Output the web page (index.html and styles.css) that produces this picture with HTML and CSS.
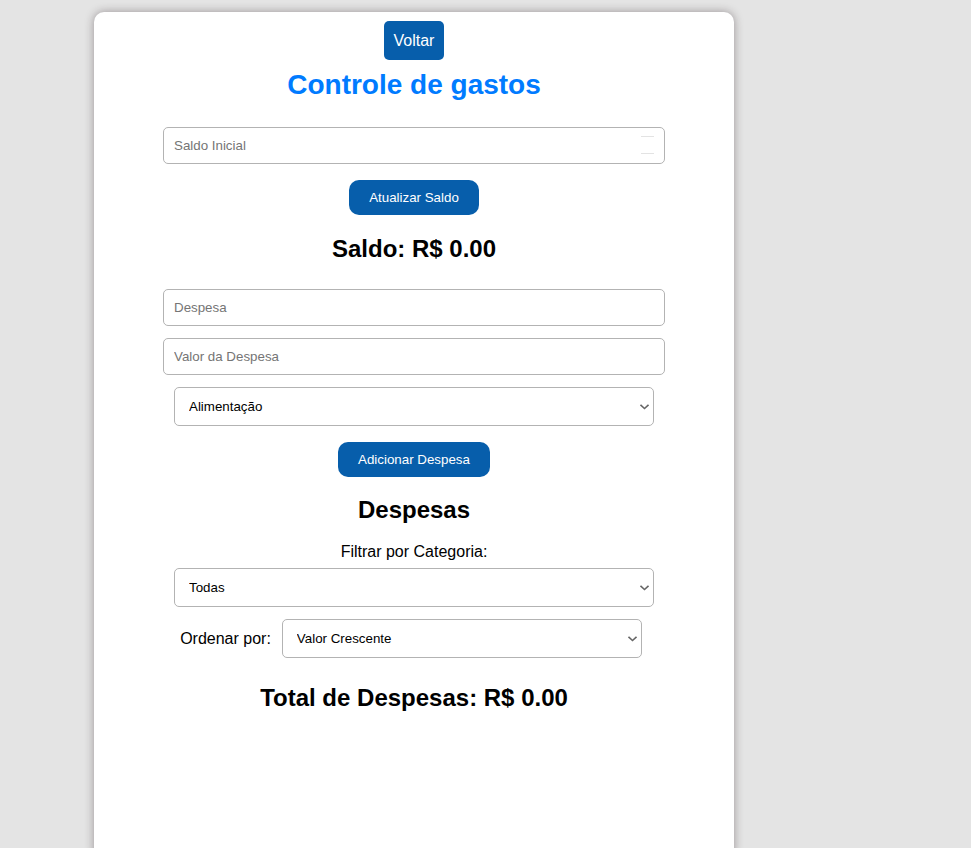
FILE: index.html
```html
<!DOCTYPE html>
<html lang="pt-BR">
<head>
<meta charset="utf-8">
<meta name="viewport" content="width=device-width, initial-scale=1">
<title>Controle de gastos</title>
<link rel="stylesheet" href="styles.css">
</head>
<body>
<main class="card">
  <a class="back" href="#">Voltar</a>
  <h1 class="title">Controle de gastos</h1>
  <input class="field field-stepper" type="number" placeholder="Saldo Inicial" aria-label="Saldo Inicial">
  <button class="button" type="button">Atualizar Saldo</button>
  <h2 class="heading heading-balance">Saldo: R$ 0.00</h2>
  <form class="form">
    <input class="field" type="text" placeholder="Despesa" aria-label="Despesa">
    <input class="field" type="number" placeholder="Valor da Despesa" aria-label="Valor da Despesa">
    <select class="select" aria-label="Categoria">
      <option>Alimentação</option>
    </select>
    <button class="button button-add" type="button">Adicionar Despesa</button>
  </form>
  <h2 class="heading heading-list">Despesas</h2>
  <label class="label" for="filtro">Filtrar por Categoria:</label>
  <select class="select select-filter" id="filtro">
    <option>Todas</option>
  </select>
  <div class="sort">
    <label class="label" for="ordem">Ordenar por:</label>
    <select class="select select-sort" id="ordem">
      <option>Valor Crescente</option>
    </select>
  </div>
  <h2 class="heading heading-total">Total de Despesas: R$ 0.00</h2>
</main>
</body>
</html>
```
FILE: styles.css
```css
* {
  box-sizing: border-box;
}

html {
  scrollbar-width: none;
}

body {
  display: flex;
  margin: 0;
  padding: 12px 12px 0 94px;
  background: #e4e4e4;
  color: #000;
  font-family: "Liberation Sans", Arial, sans-serif;
  font-size: 16px;
}

.card {
  display: flex;
  flex-direction: column;
  align-items: center;
  width: 100%;
  max-width: 640px;
  min-height: 100vh;
  padding: 9px 64px 40px;
  border-radius: 10px;
  background: #fff;
  box-shadow: 0 0 10px rgba(40, 24, 30, 0.4);
}

.back {
  padding: 10px;
  border-radius: 5px;
  background: #075eab;
  color: #fff;
  line-height: 19px;
  text-decoration: none;
}

.title {
  margin: 9px 0 26px;
  color: #007bff;
  font-size: 28px;
  line-height: 32px;
}

.form {
  display: flex;
  flex-direction: column;
  align-items: center;
  gap: 12px;
  width: 100%;
}

.field {
  width: 100%;
  max-width: 502px;
  height: 37px;
  padding: 10px;
  border: 1px solid #b3b3b3;
  border-radius: 5px;
  background-color: #fff;
  font-family: inherit;
  appearance: textfield;
}

.field::placeholder {
  color: #757575;
}

.field-stepper {
  background-image:
    linear-gradient(#e3e3e3, #e3e3e3),
    linear-gradient(#e3e3e3, #e3e3e3);
  background-position: right 10px top 8px, right 10px top 25px;
  background-repeat: no-repeat;
  background-size: 13px 1px;
}

.button {
  height: 35px;
  margin-top: 16px;
  padding: 10px 20px;
  border: 0;
  border-radius: 10px;
  background: #075eab;
  color: #fff;
  font-family: inherit;
  font-weight: 500;
}

.button-add {
  margin-top: 4px;
}

.heading {
  margin: 0;
  font-size: 24px;
  line-height: 28px;
}

.heading-balance {
  margin: 20px 0 26px;
}

.heading-list {
  margin: 19px 0;
}

.heading-total {
  margin-top: 26px;
}

.label {
  line-height: 18px;
}

.select {
  width: 100%;
  max-width: 480px;
  height: 39px;
  padding: 10px 20px 10px 14px;
  border: 1px solid #b3b3b3;
  border-radius: 5px;
  background: #fff url("data:image/svg+xml,%3Csvg xmlns='http://www.w3.org/2000/svg' width='9' height='6'%3E%3Cpath d='M.5 .8l4 3.7 4-3.7' fill='none' stroke='%23666' stroke-width='1.6'/%3E%3C/svg%3E") no-repeat right 4px center;
  color: #000;
  font-family: inherit;
  appearance: none;
}

.select-filter {
  margin: 7px 0 12px;
}

.sort {
  display: flex;
  align-items: center;
  justify-content: center;
  gap: 11px;
  width: 100%;
  padding-right: 6px;
}

.select-sort {
  max-width: 360px;
}
```
